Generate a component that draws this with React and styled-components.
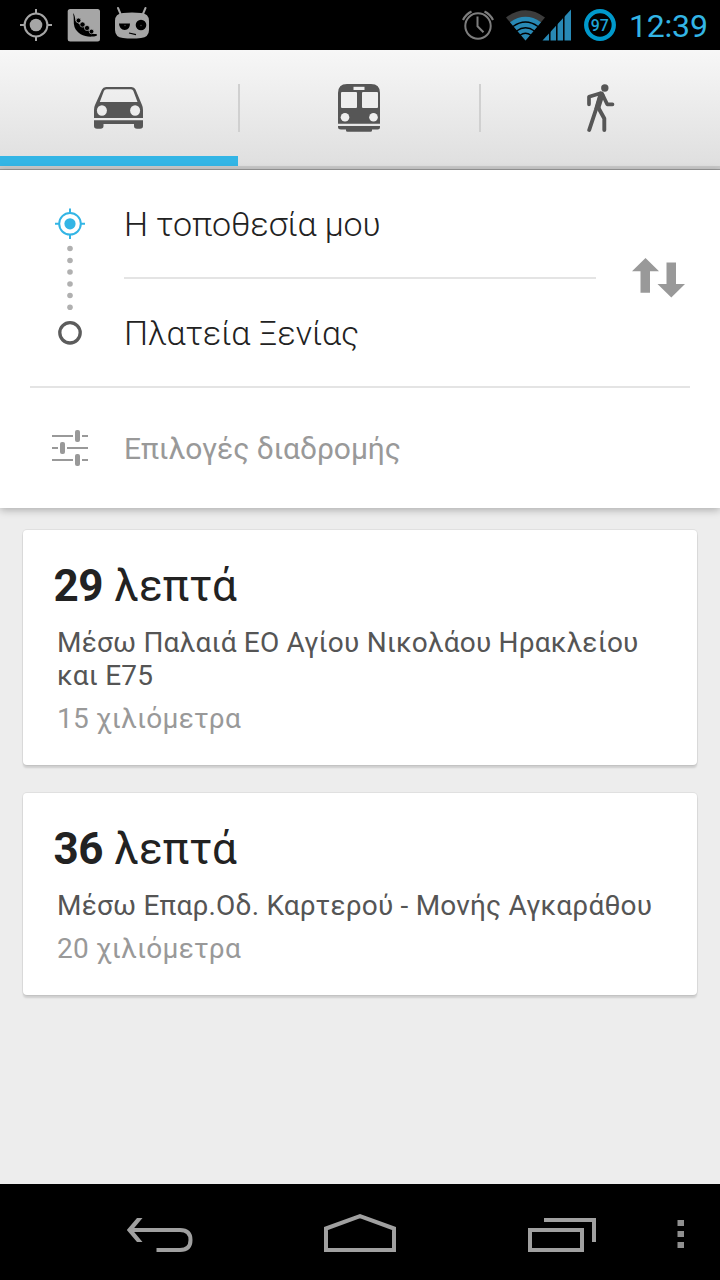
import { useState } from 'react';
import styled, { createGlobalStyle } from 'styled-components';

const routes = [
    { id: 1, minutes: '29', via: 'Μέσω Παλαιά ΕΟ Αγίου Νικολάου Ηρακλείου και Ε75', distance: '15 χιλιόμετρα' },
    { id: 2, minutes: '36', via: 'Μέσω Επαρ.Οδ. Καρτερού - Μονής Αγκαράθου', distance: '20 χιλιόμετρα' },
];

const modes = [
    { id: 'car', label: 'Αυτοκίνητο', Icon: CarIcon },
    { id: 'transit', label: 'Συγκοινωνία', Icon: TrainIcon },
    { id: 'walk', label: 'Πεζός', Icon: WalkIcon },
];

export default function App(){
    const [mode, setMode] = useState('car');

    return(
        <Screen>
            <GlobalStyle />
            <StatusBar>
                <Notifications />
                <StatusSide>
                    <SystemIcons />
                    <Clock>12:39</Clock>
                </StatusSide>
            </StatusBar>
            <Tabs>
                {modes.map(({ id, label, Icon }) =>
                    <Tab key={id} aria-label={label} $active={mode === id} onClick={() => setMode(id)}>
                        <Icon />
                    </Tab>
                )}
            </Tabs>
            <SearchPanel>
                <Endpoints>
                    <Rail><RailIcon /></Rail>
                    <Fields>
                        <Field>Η τοποθεσία μου</Field>
                        <Field>Πλατεία Ξενίας</Field>
                    </Fields>
                    <SwapButton aria-label="Εναλλαγή"><SwapIcon /></SwapButton>
                </Endpoints>
                <Options>
                    <OptionsIcon />
                    <OptionsText>Επιλογές διαδρομής</OptionsText>
                </Options>
            </SearchPanel>
            <Results>
                {routes.map((route) =>
                    <Card key={route.id}>
                        <Duration><b>{route.minutes}</b> λεπτά</Duration>
                        <Via>{route.via}</Via>
                        <Distance>{route.distance}</Distance>
                    </Card>
                )}
            </Results>
            <NavBar>
                <BackIcon />
                <HomeIcon />
                <RecentIcon />
                <MenuIcon />
            </NavBar>
        </Screen>
    );
}

function Notifications(){
    return(
        <svg width="130" height="38" viewBox="20 6 130 38">
            <g fill="none" stroke="#a6a6a6" strokeWidth="2">
                <circle cx="36" cy="25" r="11.4" />
                <path d="M36 9v5M36 36v5M20 25h5M47 25h5" />
            </g>
            <circle cx="36" cy="25" r="6.3" fill="#a6a6a6" />
            <rect x="67.700" y="9" width="32.300" height="32.500" rx="2.500" fill="#a6a6a6" />
            <path d="M73 13C75 15 75 18 75.500 21C77 28 82 33 89 34C92 34.500 95 33.500 97 34.500C97.500 36 95 36.500 92 36.600C84 37 77 33.500 74.500 27C73 23 74.500 18 73 13Z" fill="#000" />
            <path d="M75 21L94 34.500L88 35.500L76 28Z" fill="#000" />
            <g fill="#000" stroke="#a6a6a6" strokeWidth=".7">
                <circle cx="78.500" cy="20.500" r="2.400" />
                <circle cx="82.500" cy="24.500" r="2.600" />
                <circle cx="87" cy="28" r="2.600" />
                <circle cx="91.500" cy="31.500" r="2.300" />
            </g>
            <path d="M118 8l3 7M145.500 8l-3 7" stroke="#a6a6a6" strokeWidth="2" strokeLinecap="round" />
            <path d="M115 21Q115 13.500 123 13Q132 12 141 13Q149 13.500 149 21V30Q149 37 141 38Q132 39.200 123 38Q115 37 115 30Z" fill="#a6a6a6" />
            <path d="M119 23.500h11Q130 30 124.700 30Q119.500 30 119 23.500Z" fill="#000" />
            <circle cx="141" cy="25" r="5.300" fill="#000" />
            <path d="M129 33l7 1.700" stroke="#000" strokeWidth="1.200" />
            <circle cx="125" cy="25.500" r=".8" fill="#444" />
            <circle cx="141" cy="25.500" r=".8" fill="#444" />
        </svg>
    );
}

function SystemIcons(){
    return(
        <svg width="156" height="38" viewBox="461 6 156 38">
            <g fill="none" stroke="#7d7d7d" strokeWidth="2">
                <circle cx="478" cy="26" r="12.700" />
                <path d="M477.500 16.500v9.800l6 6" />
                <path d="M463 20Q466 14 471.500 11.500M493 20Q490 14 484.500 11.500" strokeWidth="2.200" />
            </g>
            <path d="M506 17.500Q525.500 3 545 17.500L525.500 40.500Z" fill="#3c3c3c" />
            <path d="M510 22.200Q525.500 11.500 541 22.200L525.500 40.500Z" fill="#2889b5" />
            <g fill="none" stroke="#000" strokeWidth="1.400">
                <path d="M513 26.500Q525.500 17.500 538 26.500" />
                <path d="M516.500 31Q525.500 24.500 534.500 31" />
                <path d="M520 35.300Q525.500 31.300 531 35.300" />
            </g>
            <path d="M542.500 40.500L571 9.500V40.500Z" fill="#2889b5" />
            <path d="M549.800 10v31M556.800 10v31M563.800 10v31" stroke="#000" strokeWidth="1.500" />
            <circle cx="600" cy="25" r="13.800" fill="none" stroke="#0099cc" strokeWidth="4.300" />
            <text x="599.800" y="31.200" textAnchor="middle" fill="#1fa3d8" fontFamily="Roboto, sans-serif" fontSize="17" fontWeight="500" textLength="18" lengthAdjust="spacingAndGlyphs">97</text>
        </svg>
    );
}

function CarIcon(){
    return(
        <svg width="50" height="43" viewBox="94 87 50 43">
            <path fillRule="evenodd" fill="#565656" d="M106 87H131.500Q134.500 87 135.500 89.500L142 105Q143 107 143 110V118H94V110Q94 107 95 105L102 89.500Q103 87 106 87ZM106.500 89.300Q104.700 89.300 104 90.800L99.800 102H137.500L133.300 90.800Q132.700 89.300 131 89.300Z" />
            <ellipse cx="101.900" cy="110.500" rx="5" ry="5.300" fill="#ececec" />
            <ellipse cx="135.100" cy="110.500" rx="5" ry="5.300" fill="#ececec" />
            <path fill="#565656" d="M94 120.300H143V126Q143 128.700 140 128.700H137Q134 128.700 134 126V124H103.500V126Q103.500 128.700 100.500 128.700H97Q94 128.700 94 126Z" />
        </svg>
    );
}

function TrainIcon(){
    return(
        <svg width="42" height="48" viewBox="338 84 42 48">
            <path fill="#565656" d="M338 123.800V93Q338 84 347 84H371Q380 84 380 93V123.800Z" />
            <g fill="#eee">
                <rect x="353.500" y="86.800" width="11" height="3.200" />
                <rect x="341" y="92" width="16" height="16" rx="1" />
                <rect x="362" y="92" width="16" height="16" rx="1" />
                <circle cx="345" cy="117.200" r="4.300" />
                <circle cx="373.500" cy="117.200" r="4.300" />
            </g>
            <path fill="#565656" d="M338 126H380V127Q380 129.500 377.500 129.500H372V130.500Q372 131.700 370.500 131.700H347.500Q346 131.700 346 130.500V129.500H341Q338 129.500 338 127Z" />
        </svg>
    );
}

function WalkIcon(){
    return(
        <svg width="28" height="48" viewBox="586.500 84 28 48" fill="none" stroke="#565656" strokeLinecap="round" strokeLinejoin="round">
            <circle cx="604.300" cy="88" r="3.700" fill="#565656" stroke="none" />
            <path d="M588.500 104.300V96.800L600 93.300" strokeWidth="3.700" />
            <path d="M601.500 93.500L606.700 104.300H612" strokeWidth="3.700" />
            <path d="M600 94L595.500 109.500L588.700 130" strokeWidth="3.900" />
            <path d="M598 108L603.800 118.500V130" strokeWidth="3.900" />
            <path d="M600 92.500L603 95L598.500 109L595 109Z" fill="#565656" strokeWidth="2" />
        </svg>
    );
}

// start marker, dotted line and destination ring
function RailIcon(){
    return(
        <svg width="32" height="140" viewBox="54 208 32 140">
            <g fill="none" stroke="#33b5e5" strokeWidth="2">
                <circle cx="70" cy="223.800" r="10.800" />
                <path d="M70 208.500v5M70 234v5M55 223.800h5M80 223.800h5" />
            </g>
            <circle cx="70" cy="223.800" r="5.600" fill="#33b5e5" />
            {[248.500, 260.500, 272, 284, 295.500, 307.300].map((y) =>
                <circle key={y} cx="70" cy={y} r="2.800" fill="#b0b0b0" />
            )}
            <circle cx="70" cy="332.800" r="10.200" fill="none" stroke="#5c5c5c" strokeWidth="3.300" />
        </svg>
    );
}

function SwapIcon(){
    return(
        <svg width="54" height="40" viewBox="632 258 54 40" fill="#999">
            <path d="M645.500 258L659 271.300H650V292.700H640.500V271.300H632Z" />
            <path d="M666.500 262.500H676V284H685L671.300 297.500L657.500 284H666.500Z" />
        </svg>
    );
}

function OptionsIcon(){
    return(
        <svg width="36" height="36" viewBox="52 430 36 36" fill="#999">
            <path d="M52 435h21v2H52zM82 435h6v2h-6zM52 447h6v2h-6zM67 447h21v2H67zM52 459h21v2H52zM82 459h6v2h-6z" />
            <rect x="75" y="430" width="5" height="12" rx="2" />
            <rect x="60" y="442" width="5" height="12" rx="2" />
            <rect x="75" y="454" width="5" height="12" rx="2" />
        </svg>
    );
}

function BackIcon(){
    return(
        <svg width="66" height="36" viewBox="127 1218 66 36" fill="none" stroke="#a0a0a0" strokeWidth="4">
            <path d="M131 1230H180Q190.500 1230 190.500 1240Q190.500 1250 180 1250H156.500" />
            <path fill="#a0a0a0" stroke="none" d="M137 1218H142.500L132.500 1230L142.500 1242H137L126.800 1230Z" />
        </svg>
    );
}

function HomeIcon(){
    return(
        <svg width="72" height="38" viewBox="324 1214 72 38" fill="none" stroke="#a0a0a0" strokeWidth="4">
            <path d="M326 1250V1228.500L360 1216.200L394 1228.500V1250Z" />
        </svg>
    );
}

function RecentIcon(){
    return(
        <svg width="68" height="34" viewBox="528 1218 68 34" fill="none" stroke="#a0a0a0" strokeWidth="4">
            <path d="M544 1220H594V1242" />
            <rect x="530" y="1230" width="52" height="20" />
        </svg>
    );
}

function MenuIcon(){
    return(
        <svg width="8" height="28" viewBox="677 1220 8 28" fill="#909090">
            <path d="M677.500 1220h6.500v6h-6.500zM677.500 1231h6.500v6h-6.500zM677.500 1242h6.500v6h-6.500z" />
        </svg>
    );
}

const GlobalStyle = createGlobalStyle`
    *{
        box-sizing: border-box;
    }
    body{
        margin: 0;
        font-family: Roboto, sans-serif;
        background: #ededed;
    }
    svg{
        display: block;
        flex: none;
    }
`;

const Screen = styled.div`
    display: flex;
    flex-direction: column;
    width: 720px;
    height: 1280px;
    background: #ededed;
`;

const StatusBar = styled.header`
    display: flex;
    align-items: center;
    justify-content: space-between;
    height: 50px;
    padding: 0 12px 0 20px;
    background: #000;
`;

const StatusSide = styled.div`
    display: flex;
    align-items: center;
`;

const Clock = styled.span`
    width: 91px;
    padding: 2px 0 0 12px;
    font-size: 32px;
    line-height: 38px;
    letter-spacing: -0.2px;
    white-space: nowrap;
    color: #33b5e5;
`;

const Tabs = styled.nav`
    display: grid;
    grid-template-columns: 240px 241px 239px;
    height: 120px;
    border-bottom: 1px solid #999;
    background: linear-gradient(#f7f7f7, #dfdfdf 116px, #c8c8c8 116px);
`;

const Tab = styled.button`
    display: flex;
    align-items: center;
    justify-content: center;
    height: 116px;
    padding: 0 3px 0 0;
    border: none;
    background:
        linear-gradient(${({ $active }) => $active ? '#33b5e5, #33b5e5' : 'transparent, transparent'}) 0 100% / calc(100% - 2px) 10px no-repeat,
        linear-gradient(#d0d0d0, #d0d0d0) 100% 34px / 2px 48px no-repeat;

    &:first-child{
        padding-right: 2px;
    }
    &:last-child{
        padding-right: 0;
        background-size: 100% 10px, 0 0;
    }
`;

const SearchPanel = styled.section`
    height: 338px;
    padding: 0 30px;
    background: #fff;
    box-shadow: 0 2px 8px rgba(0, 0, 0, .28);
`;

const Endpoints = styled.div`
    display: flex;
    height: 218px;
    border-bottom: 2px solid #e4e4e4;
`;

const Rail = styled.div`
    width: 94px;
    padding: 38px 0 0 24px;
`;

const Fields = styled.div`
    width: 472px;
`;

const Field = styled.div`
    display: flex;
    align-items: center;
    height: 107px;
    padding-top: 1px;
    font-size: 34px;
    font-weight: 300;
    letter-spacing: -0.13px;
    color: #222;

    &:first-child{
        height: 109px;
        border-bottom: 2px solid #e4e4e4;
    }
`;

const SwapButton = styled.button`
    display: flex;
    align-items: center;
    margin-left: 36px;
    padding: 0;
    border: none;
    background: none;
`;

const Options = styled.div`
    display: flex;
    align-items: center;
    height: 120px;
    padding-left: 22px;
    gap: 36px;
`;

const OptionsText = styled.span`
    padding-top: 2px;
    font-size: 30px;
    line-height: 36px;
    letter-spacing: -0.06px;
    color: #999;
`;

const Results = styled.main`
    flex: 1;
    display: flex;
    flex-direction: column;
    gap: 28px;
    padding: 22px 23px 0;
`;

const Card = styled.article`
    padding: 29px 31px 30px;
    border-radius: 4px;
    background: #fff;
    box-shadow: 0 0 0 1px rgba(0, 0, 0, .05), 0 3px 2px rgba(0, 0, 0, .13);
`;

const Duration = styled.h2`
    margin: 0 0 0 -0.5px;
    font-size: 44px;
    line-height: 54px;
    font-weight: 400;
    letter-spacing: 0.2px;
    color: #222;

    b{
        letter-spacing: -0.4px;
    }
`;

const Via = styled.p`
    margin: 13px 0 0 3px;
    font-size: 28px;
    line-height: 33px;
    letter-spacing: 0.2px;
    color: #555;
`;

const Distance = styled.p`
    margin: 10px 0 0 3px;
    font-size: 28px;
    line-height: 33px;
    letter-spacing: 0.22px;
    color: #999;
`;

const NavBar = styled.footer`
    display: grid;
    grid-template-columns: 197px 204px 149px 8px;
    height: 96px;
    padding: 34px 0 0 127px;
    background: #000;

    svg:nth-child(2){
        margin-top: -4px;
    }
    svg:nth-child(4){
        margin-top: 2px;
    }
`;
